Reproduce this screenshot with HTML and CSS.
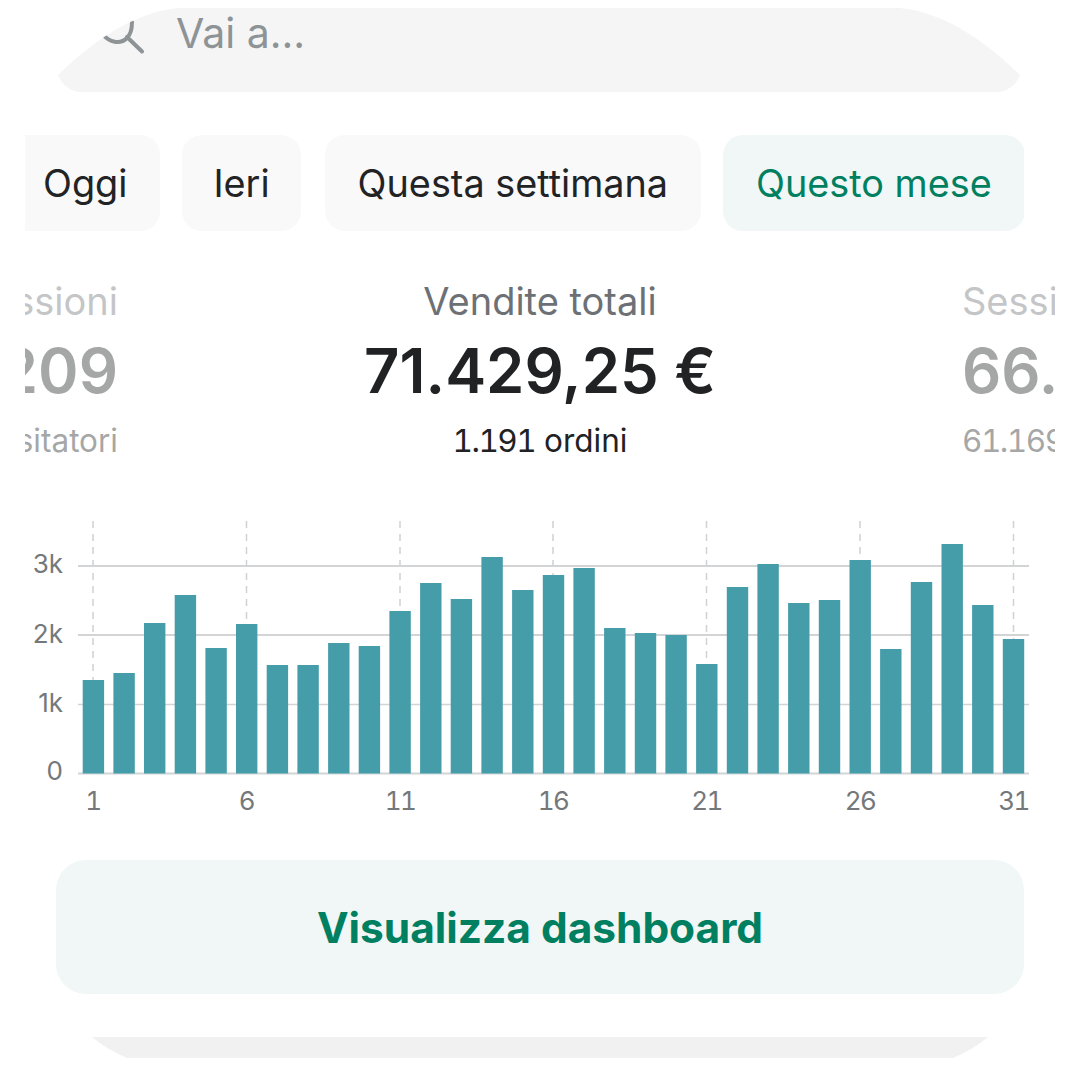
FILE: index.html
```html
<!DOCTYPE html>
<html lang="it">
<head>
<meta charset="utf-8">
<title>Dashboard</title>
<link rel="stylesheet" href="styles.css">
</head>
<body>
<main class="page">
  <div class="search">
    <svg class="search-icon" viewBox="0 0 44 38" width="44" height="38" aria-hidden="true">
      <path d="M1.5 18C7 25 18 28 25 21C28 18 30 13 30 5"/>
      <line x1="25" y1="20" x2="40" y2="34.5"/>
    </svg>
    <span class="search-text">Vai a...</span>
  </div>

  <div class="chips">
    <span class="chip chip-first">Oggi</span>
    <span class="chip chip-short">Ieri</span>
    <span class="chip">Questa settimana</span>
    <span class="chip chip-active">Questo mese</span>
  </div>

  <div class="metrics">
    <div class="metric metric-left">
      <div class="metric-label">Sessioni</div>
      <div class="metric-value">66.209</div>
      <div class="metric-sub"><span class="metric-num">61.169</span> visitatori</div>
    </div>
    <div class="metric metric-main">
      <div class="metric-label">Vendite totali</div>
      <div class="metric-value">71.429,25 €</div>
      <div class="metric-sub"><span class="metric-num">1.191</span> ordini</div>
    </div>
    <div class="metric metric-right">
      <div class="metric-label">Sessioni</div>
      <div class="metric-value">66.209</div>
      <div class="metric-sub"><span class="metric-num">61.169</span> visitatori</div>
    </div>
  </div>

  <svg class="chart" viewBox="0 510 1080 310" width="1080" height="310" role="img" aria-label="Vendite per giorno">
    <g class="grid-v">
      <line x1="93" y1="521" x2="93" y2="773"/>
      <line x1="246.5" y1="521" x2="246.5" y2="773"/>
      <line x1="400" y1="521" x2="400" y2="773"/>
      <line x1="553" y1="521" x2="553" y2="773"/>
      <line x1="706.5" y1="521" x2="706.5" y2="773"/>
      <line x1="860" y1="521" x2="860" y2="773"/>
      <line x1="1013.5" y1="521" x2="1013.5" y2="773"/>
    </g>
    <g class="grid-h">
      <line x1="78" y1="566" x2="1029" y2="566"/>
      <line x1="78" y1="635" x2="1029" y2="635"/>
      <line class="grid-thin" x1="78" y1="704.5" x2="1029" y2="704.5"/>
      <line x1="78" y1="773.5" x2="1029" y2="773.5"/>
    </g>
    <g class="bars">
      <rect x="82.7" y="680" width="21.4" height="93.5"/>
      <rect x="113.4" y="673" width="21.4" height="100.5"/>
      <rect x="144" y="623" width="21.4" height="150.5"/>
      <rect x="174.7" y="595" width="21.4" height="178.5"/>
      <rect x="205.4" y="648" width="21.4" height="125.5"/>
      <rect x="236" y="624" width="21.4" height="149.5"/>
      <rect x="266.7" y="665" width="21.4" height="108.5"/>
      <rect x="297.4" y="665" width="21.4" height="108.5"/>
      <rect x="328.1" y="643" width="21.4" height="130.5"/>
      <rect x="358.7" y="646" width="21.4" height="127.5"/>
      <rect x="389.4" y="611" width="21.4" height="162.5"/>
      <rect x="420.1" y="583" width="21.4" height="190.5"/>
      <rect x="450.7" y="599" width="21.4" height="174.5"/>
      <rect x="481.4" y="557" width="21.4" height="216.5"/>
      <rect x="512.1" y="590" width="21.4" height="183.5"/>
      <rect x="542.8" y="575" width="21.4" height="198.5"/>
      <rect x="573.4" y="568" width="21.4" height="205.5"/>
      <rect x="604.1" y="628" width="21.4" height="145.5"/>
      <rect x="634.8" y="633" width="21.4" height="140.5"/>
      <rect x="665.4" y="635" width="21.4" height="138.5"/>
      <rect x="696.1" y="664" width="21.4" height="109.5"/>
      <rect x="726.8" y="587" width="21.4" height="186.5"/>
      <rect x="757.4" y="564" width="21.4" height="209.5"/>
      <rect x="788.1" y="603" width="21.4" height="170.5"/>
      <rect x="818.8" y="600" width="21.4" height="173.5"/>
      <rect x="849.5" y="560" width="21.4" height="213.5"/>
      <rect x="880.1" y="649" width="21.4" height="124.5"/>
      <rect x="910.8" y="582" width="21.4" height="191.5"/>
      <rect x="941.5" y="544" width="21.4" height="229.5"/>
      <rect x="972.1" y="605" width="21.4" height="168.5"/>
      <rect x="1002.8" y="639" width="21.4" height="134.5"/>
    </g>
    <g class="axis-y">
      <text x="63" y="573">3k</text>
      <text x="63" y="643">2k</text>
      <text x="63" y="712">1k</text>
      <text x="63" y="780">0</text>
    </g>
    <g class="axis-x">
      <text x="93" y="810">1</text>
      <text x="246.5" y="810">6</text>
      <text x="400" y="810">11</text>
      <text x="553" y="810">16</text>
      <text x="706.5" y="810">21</text>
      <text x="860" y="810">26</text>
      <text x="1013.5" y="810">31</text>
    </g>
  </svg>

  <div class="cta">Visualizza dashboard</div>
  <div class="peek"></div>
</main>
</body>
</html>
```

FILE: styles.css
```css
* { box-sizing: border-box; }
html, body { margin: 0; padding: 0; background: #fff; }
body { font-family: Inter, "Liberation Sans", sans-serif; }
.page { width: 1080px; height: 1080px; overflow: hidden; padding-top: 8px; }

.search {
  margin: 0 60px 0 58px;
  height: 84px;
  background: #f5f5f6;
  clip-path: path("M120 0C80 4 40 28 0 67Q5 80 19 84H943Q957 80 962 67C922 28 882 4 842 0Z");
  display: flex;
  align-items: flex-start;
  padding-left: 44px;
}
.search-icon { margin-top: 9px; flex: none; }
.search-icon path, .search-icon line { fill: none; stroke: #8e9396; stroke-width: 4; stroke-linecap: round; }
.search-text { margin-left: 30px; font-size: 41px; line-height: 50px; color: #8e9396; }

.chips {
  margin: 43px 56px 0 25px;
  height: 96px;
  display: flex;
  gap: 22px;
  overflow: hidden;
}
.chip {
  flex: none;
  height: 96px;
  padding: 0 33px;
  display: flex;
  align-items: center;
  background: #f9f9fa;
  border-radius: 20px;
  font-size: 37.8px;
  color: #222325;
}
.chip-first { padding-left: 18px; border-radius: 0 20px 20px 0; }
.chip-short { padding: 0 31px; margin-right: 2px; }
.chip-active { background: #f1f7f6; color: #008060; }

.metrics {
  margin: 48px 25px 0;
  display: flex;
  justify-content: space-between;
  overflow: hidden;
  height: 182px;
}
.metric { display: flex; flex-direction: column; white-space: nowrap; }
.metric-left { width: 93px; align-items: flex-end; opacity: .4; }
.metric-right { width: 93px; align-items: flex-start; opacity: .4; }
.metric-main { align-items: center; }
.metric-label { font-size: 38px; line-height: 44px; color: #6d7175; }
.metric-value { margin-top: 11px; font-size: 61.5px; line-height: 74px; font-weight: 600; color: #202223; }
.metric-sub { margin-top: 13px; font-size: 31.5px; line-height: 40px; color: #202223; }
.metric-num { font-variant-numeric: tabular-nums; letter-spacing: -1.5px; }

.chart { display: block; margin-top: 49px; }
.grid-v line { stroke: #cfd1d3; stroke-width: 1.5; stroke-dasharray: 7 6; }
.grid-h line { stroke: #d2d4d6; stroke-width: 2; }
.grid-h .grid-thin { stroke-width: 1.5; }
.bars rect { fill: #459da9; }
.axis-y text, .axis-x text { font-family: Inter, "Liberation Sans", sans-serif; font-size: 26px; fill: #75787b; }
.axis-y text { text-anchor: end; }
.axis-x text { text-anchor: middle; font-variant-numeric: tabular-nums; letter-spacing: -1.5px; }

.cta {
  margin: 40px 56px 0;
  height: 134px;
  background: #f1f7f6;
  border-radius: 30px;
  display: flex;
  align-items: center;
  justify-content: center;
  font-size: 42.4px;
  font-weight: 700;
  color: #008060;
}
.peek {
  margin: 43px 92px 0;
  height: 21px;
  background: #f1f1f1;
  clip-path: path("M0 0H896Q882 12 861 21H35Q14 12 0 0Z");
}
```
